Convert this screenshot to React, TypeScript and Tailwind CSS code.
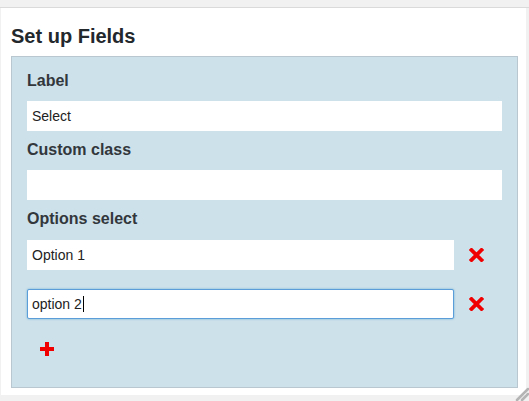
import React from 'react';

const font = { fontFamily: '"Liberation Sans", Arial, sans-serif' };

const RemoveIcon = () => (
  <svg width="15" height="14" viewBox="0 0 15 14" className="shrink-0">
    <path d="M2.5 2 L12.5 12 M12.5 2 L2.5 12" stroke="#f00000" strokeWidth="3.8" strokeLinecap="square" />
  </svg>
);

const AddIcon = () => (
  <svg width="16" height="16" viewBox="0 0 16 16">
    <path d="M8 1 V15 M1 8 H15" stroke="#f00000" strokeWidth="4" />
  </svg>
);

const Field = ({ label, value }: { label: string; value: string }) => (
  <div className="flex flex-col">
    <label className="text-[16px] leading-[20px] font-bold text-[#32373c]">{label}</label>
    <div className="mt-[10px] h-[30px] bg-white flex items-center px-[5px] text-[14px] text-[#222]">{value}</div>
  </div>
);

export default function App() {
  return (
    <div className="w-[529px] h-[401px] bg-[#f1f1f1] flex flex-col relative overflow-hidden" style={font}>
      <div className="h-[7px] border-b border-[#dadada] shrink-0 box-content" />
      <div className="ml-[1px] mr-[3px] h-[387px] bg-white flex flex-col">
        <h2 className="mt-[16px] ml-[10px] text-[20px] leading-[24px] font-bold text-[#23282d]">Set up Fields</h2>
        <div className="mt-[8px] ml-[10px] w-[507px] h-[332px] bg-[#cde1eb] border border-[#b9c8d0] px-[15px] pt-[14px] flex flex-col">
          <Field label="Label" value="Select" />
          <div className="mt-[9px]">
            <Field label="Custom class" value="" />
          </div>
          <label className="mt-[9px] text-[16px] leading-[20px] font-bold text-[#32373c]">Options select</label>
          <div className="mt-[11px] flex items-center gap-[15px]">
            <div className="w-[427px] h-[30px] bg-white flex items-center px-[5px] text-[14px] text-[#222]">Option 1</div>
            <RemoveIcon />
          </div>
          <div className="mt-[19px] flex items-center gap-[15px]">
            <div className="w-[427px] h-[30px] bg-white border border-[#5b9dd9] rounded-[2px] shadow-[0_0_2px_rgba(30,140,190,0.6)] flex items-center px-[4px] text-[14px] text-[#222]">
              option 2<span className="w-px h-[16px] bg-black ml-[1px]" />
            </div>
            <RemoveIcon />
          </div>
          <div className="mt-[22px] ml-[12px]">
            <AddIcon />
          </div>
        </div>
      </div>
      <svg className="absolute right-0 bottom-0" width="16" height="16" viewBox="0 0 16 16">
        <path d="M4 15 L15 4 M9 15 L15 9" stroke="#b4b4b4" strokeWidth="2.5" strokeLinecap="round" />
      </svg>
    </div>
  );
}
